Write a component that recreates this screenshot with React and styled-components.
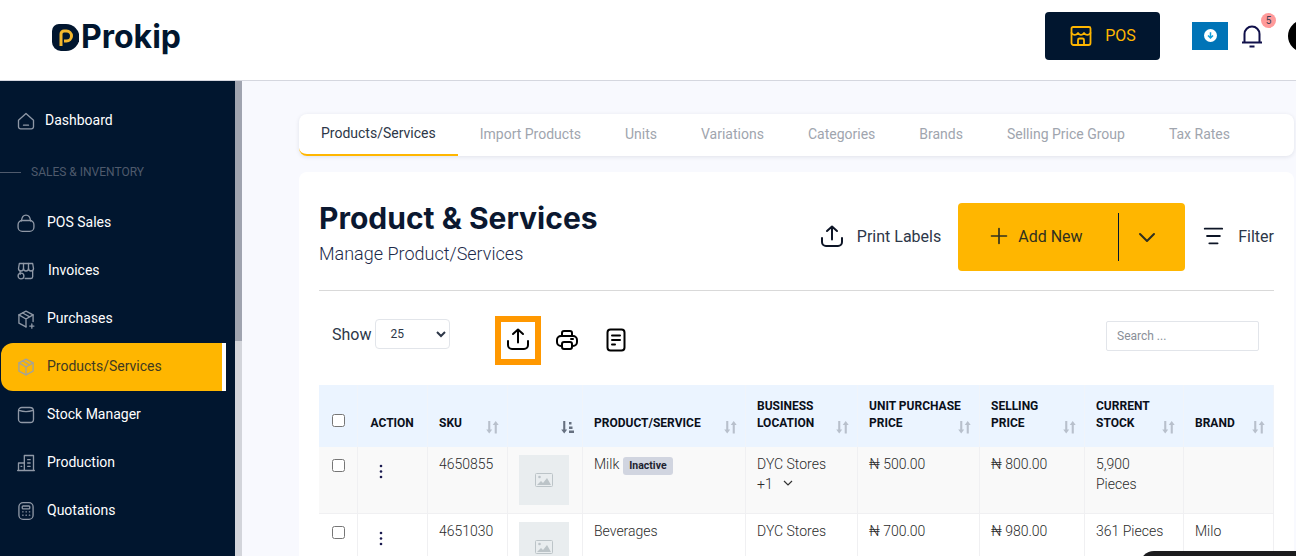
import React from 'react';
import styled, { createGlobalStyle } from 'styled-components';

const GlobalStyle = createGlobalStyle`
  html, body {
    margin: 0;
    height: 556px;
    overflow: hidden;
    background: #fff;
    font-family: Roboto, "Liberation Sans", sans-serif;
  }
  * { box-sizing: border-box; }
`;

const Shell = styled.div`
  width: 1296px;
  height: 556px;
  overflow: hidden;
  position: relative;
  display: flex;
  flex-direction: column;
`;

const TopBar = styled.header`
  flex: 0 0 81px;
  display: flex;
  align-items: center;
  background: #fff;
  border-bottom: 1px solid #d5d7df;
  padding-left: 52px;
`;

const Logo = styled.div`
  display: flex;
  align-items: center;
  gap: 2px;
  margin-top: -6px;
`;

const LogoText = styled.span`
  font-family: Inter, sans-serif;
  font-weight: 700;
  font-size: 32px;
  line-height: 38px;
  color: #01162f;
`;

const TopActions = styled.div`
  margin-left: auto;
  display: flex;
  align-items: center;
  margin-right: -24px;
  margin-top: -9px;
`;

const PosButton = styled.button`
  width: 115px;
  height: 48px;
  border: 0;
  border-radius: 4px;
  background: #01162f;
  color: #ffb600;
  font: 400 16px Roboto, sans-serif;
  display: flex;
  align-items: center;
  justify-content: center;
  gap: 12px;
  margin-right: 32px;
`;

const Download = styled.div`
  width: 36px;
  height: 28px;
  background: #0074b7;
  display: flex;
  align-items: center;
  justify-content: center;
  margin-right: 12px;
`;

const BellWrap = styled.div`
  position: relative;
  width: 24px;
  height: 24px;
  margin-right: 24px;
`;

const Badge = styled.span`
  position: absolute;
  top: -11px;
  left: 21px;
  width: 15px;
  height: 15px;
  border-radius: 50%;
  background: #ff9a9a;
  color: #3a3f55;
  font-size: 10px;
  line-height: 15px;
  text-align: center;
`;

const Avatar = styled.div`
  width: 32px;
  height: 32px;
  border-radius: 50%;
  background: #000;
  flex: none;
`;

const Body = styled.div`
  flex: 1;
  display: flex;
  min-height: 0;
`;

const Sidebar = styled.nav`
  flex: 0 0 235px;
  background: #01162f;
  padding: 16px 9px 0 1px;
  display: flex;
  flex-direction: column;
`;

const ScrollTrack = styled.div`
  flex: 0 0 7px;
  background: #d3d5db;
`;

const ScrollThumb = styled.div`
  height: 260px;
  background: #a0a4b0;
`;

const NavItem = styled.a`
  height: 48px;
  flex: none;
  display: flex;
  align-items: center;
  padding-left: ${(p) => p.$pad || 46}px;
  padding-bottom: 2px;
  position: relative;
  font-size: 14px;
  font-weight: 400;
  color: ${(p) => (p.$active ? '#3f3a20' : '#fff')};
  background: ${(p) => (p.$active ? '#ffb600' : 'transparent')};
  border-radius: ${(p) => (p.$active ? '12px 0 0 12px' : '0')};
  border-right: ${(p) => (p.$active ? '4px solid #fff' : '0')};
  svg {
    position: absolute;
    left: 15px;
    top: 50%;
    margin-top: -10px;
    color: ${(p) => (p.$active ? '#a3a39a' : '#8f98a6')};
  }
`;

const NavSection = styled.div`
  height: 54px;
  flex: none;
  margin-left: -1px;
  display: flex;
  align-items: center;
  gap: 10px;
  font-size: 12px;
  font-weight: 400;
  color: #4f5a6c;
  &::before {
    content: '';
    width: 21px;
    height: 1px;
    background: #4f5a6c;
  }
`;

const Main = styled.main`
  flex: 1;
  min-width: 0;
  background: #f8f9fe;
  padding: 33px 0 0 57px;
`;

const Tabs = styled.div`
  height: 42px;
  width: 995px;
  background: #fff;
  border-radius: 8px;
  display: flex;
  box-shadow: 0 1px 4px rgba(20, 30, 60, 0.1);
`;

const Tab = styled.div`
  height: 42px;
  padding: 0 22px;
  font-size: 14px;
  line-height: ${(p) => (p.$active ? 39 : 41)}px;
  white-space: nowrap;
  color: ${(p) => (p.$active ? '#2d3748' : '#a0a5ae')};
  border-bottom: ${(p) => (p.$active ? '2px solid #ffb600' : '0')};
  border-radius: ${(p) => (p.$active ? '0 0 0 8px' : '0')};
`;

const Card = styled.section`
  margin-top: 16px;
  width: 995px;
  height: 500px;
  background: #fff;
  border-radius: 8px;
  padding: 0 20px;
`;

const CardHead = styled.div`
  height: 119px;
  display: flex;
  align-items: center;
  border-bottom: 1px solid #d9d9d9;
  padding-top: 12px;
`;

const Title = styled.div`
  margin-right: auto;
  margin-top: -8px;
`;

const H1 = styled.h1`
  margin: -1px 0 0;
  font-family: Inter, sans-serif;
  font-size: 30px;
  line-height: 36px;
  font-weight: 700;
  color: #0b1830;
`;

const Sub = styled.div`
  font-size: 18px;
  font-weight: 300;
  line-height: 22px;
  margin-top: 7px;
  color: #1c2a4a;
`;

const TextAction = styled.div`
  display: flex;
  align-items: center;
  color: #2d3748;
  font-size: 16px;
  padding-bottom: 2px;
  gap: ${(p) => p.$gap}px;
  margin-right: ${(p) => p.$mr || 0}px;
  svg { color: #0d1526; }
`;

const AddNew = styled.div`
  width: 227px;
  height: 68px;
  background: #ffb600;
  border-radius: 4px;
  display: flex;
  align-items: center;
  color: #30301f;
  font-size: 16px;
  margin-right: 17px;
`;

const AddLabel = styled.div`
  width: 161px;
  height: 48px;
  border-right: 1px solid #01162f;
  display: flex;
  align-items: center;
  gap: 9px;
  padding: 0 0 2px 31px;
`;

const AddCaret = styled.div`
  flex: 1;
  display: flex;
  justify-content: center;
  padding-right: 10px;
`;

const Tools = styled.div`
  height: 94px;
  display: flex;
  align-items: center;
  padding: 0 15px 0 13px;
`;

const ShowLabel = styled.label`
  font-size: 16px;
  color: #2d3748;
  display: flex;
  align-items: center;
  gap: 4px;
  margin-right: 45px;
  margin-top: -8px;
`;

const PageSize = styled.select`
  width: 75px;
  height: 30px;
  border: 1px solid #e2e5ea;
  border-radius: 4px;
  background: #fff;
  font: 12px Roboto, sans-serif;
  color: #2d3748;
  padding-left: 10px;
`;

const ToolButton = styled.div`
  width: 46px;
  height: 49px;
  display: flex;
  align-items: center;
  justify-content: center;
  border: ${(p) => (p.$focus ? '6px solid #ff9800' : '0')};
  padding-bottom: ${(p) => (p.$focus ? 4 : 0)}px;
  margin-right: 3px;
  margin-top: ${(p) => (p.$focus ? 5 : 3)}px;
  color: #000;
`;

const Search = styled.input`
  margin-left: auto;
  width: 153px;
  height: 30px;
  border: 1px solid #e2e5ea;
  border-radius: 2px;
  font: 12px Roboto, sans-serif;
  padding: 0 10px;
  margin-top: -4px;
  &::placeholder { color: #8a8f98; }
`;

const Table = styled.table`
  width: 954px;
  table-layout: fixed;
  border-collapse: collapse;
`;

const Th = styled.th`
  height: 62px;
  background: #ebf4ff;
  border-right: 1px solid #f0f4fa;
  padding: 0 0 15px ${(p) => p.$pl || 11.5}px;
  position: relative;
  vertical-align: bottom;
  text-align: left;
  font-size: 12px;
  line-height: 17px;
  font-weight: 700;
  white-space: nowrap;
  color: #0a0f1a;
  svg {
    position: absolute;
    right: 8px;
    bottom: 13px;
  }
`;

const Td = styled.td`
  height: ${(p) => p.$h}px;
  padding: 7px 11.5px;
  border-right: 1px solid #f0f0f2;
  border-bottom: 1px solid #f0f0f2;
  vertical-align: top;
  font-size: 14px;
  line-height: 20px;
  font-weight: 300;
  color: #2b2b2b;
  background: ${(p) => (p.$alt ? '#f9f9f9' : '#fff')};
`;

const Tag = styled.span`
  display: inline-block;
  height: 18px;
  line-height: 18px;
  padding: 0 6px;
  margin-left: 4px;
  border-radius: 3px;
  background: #d1d5e0;
  font-size: 10.5px;
  font-weight: 700;
  color: #1d2230;
  vertical-align: top;
  margin-top: 3px;
`;

const Thumb = styled.div`
  width: 50px;
  height: 50px;
  margin-top: 1px;
  background: #e9edef;
  display: flex;
  align-items: center;
  justify-content: center;
  color: #bcc4c8;
`;

const Check = styled.input.attrs({ type: 'checkbox' })`
  width: 13px;
  height: 13px;
  margin: 5px 0 0 1px;
`;

const Kebab = styled.div`
  padding: 10px 0 0 10px;
  color: #1a1a50;
`;

const Caret = styled.span`
  margin-left: 10px;
  svg { vertical-align: 3px; }
`;

const Chat = styled.div`
  position: absolute;
  right: 0;
  bottom: -30px;
  width: 156px;
  height: 35px;
  background: #1c1c1e;
  border-radius: 14px 0 0 0;
`;

const Ico = ({ size = 20, sw = 1.6, children }) => (
  <svg
    width={size}
    height={size}
    viewBox="0 0 24 24"
    fill="none"
    stroke="currentColor"
    strokeWidth={sw}
    strokeLinecap="round"
    strokeLinejoin="round"
  >
    {children}
  </svg>
);

const icons = {
  home: (
    <>
      <path d="M3 11l9-8 9 8v8a2.500 2.500 0 0 1-2.500 2.500h-13A2.500 2.500 0 0 1 3 19z" />
      <path d="M9 17h6" />
    </>
  ),
  bag: (
    <>
      <rect x="2.500" y="9" width="19" height="13" rx="5" />
      <path d="M6.500 9.500C7 5 9 2.500 12 2.500s5 2.500 5.500 7" />
    </>
  ),
  shop: (
    <>
      <path d="M4 3h16l1 6a3 3 0 0 1-6 0 3 3 0 0 1-6 0 3 3 0 0 1-6 0z" />
      <path d="M9 3v6M15 3v6M5 12v4M20 12v7a2 2 0 0 1-2 2h-7" />
      <circle cx="6" cy="18" r="3.500" />
    </>
  ),
  box: (
    <>
      <path d="M12 2.500l8.500 4.500v8M12 2.500L3.500 7v10l8.500 4.500" />
      <path d="M3.500 7l8.500 5 8.500-5M12 12v9.500M8 4.800l8.500 4.700" />
      <path d="M19 18v5M16.500 20.500h5" />
    </>
  ),
  cube: (
    <>
      <path d="M12 2.500l8.500 4.500v10L12 21.500 3.500 17V7z" />
      <path d="M3.500 7l8.500 5 8.500-5M12 12v9.500M8 4.800l8.500 4.700" />
    </>
  ),
  stock: <path d="M7 3h9.500c3 0 4.500 1.500 4.500 4.500V17a4 4 0 0 1-4 4H7a4 4 0 0 1-4-4V7a4 4 0 0 1 4-4zM3.500 6.500C8 8 16 8 20.500 6.500" />,
  building: (
    <>
      <path d="M3 21V12h7M10 21V3h11v18zM2 21h20" />
      <path d="M14 8h3M14 12h3M14 16h3M6 16h1" />
    </>
  ),
  calc: (
    <>
      <rect x="3.500" y="2" width="17" height="20" rx="5" />
      <rect x="7.500" y="6" width="9" height="3.500" rx="1" />
      <path d="M8 13h.5M12 13h.5M16 13h.5M8 17h.5M12 17h.5M16 17h.5" />
    </>
  ),
};

const nav = [
  ['bag', 'POS Sales'],
  ['shop', 'Invoices', 47],
  ['box', 'Purchases'],
  ['cube', 'Products/Services', 46, true],
  ['stock', 'Stock Manager'],
  ['building', 'Production'],
  ['calc', 'Quotations'],
];

const tabs = [
  'Products/Services',
  'Import Products',
  'Units',
  'Variations',
  'Categories',
  'Brands',
  'Selling Price Group',
  'Tax Rates',
];

const UploadIcon = () => (
  <Ico size={24} sw={2}>
    <path d="M12 15.500V2.500M7 7l5-4.500L17 7" />
    <path d="M2 14v4a4 4 0 0 0 4 4h12a4 4 0 0 0 4-4v-4" />
  </Ico>
);

const SortIcon = () => (
  <svg width="13" height="14" viewBox="0 0 13 14" fill="#b8c0cc">
    <path d="M2.200 1h2.100v8.500h1.900L3.200 13.500 .2 9.500h2zM8.700 13.500h2.100V5h1.900L9.700 1 6.700 5h2z" />
  </svg>
);

const SortActive = () => (
  <svg width="13" height="14" viewBox="0 0 13 14" fill="#667080">
    <path d="M2.200 1h2.100v8.500h1.900L3.200 13.500 .2 9.500h2zM8 2h2.500v2.500H8zM8 6.500h3.500V9H8zM8 10.500h5V13H8z" />
  </svg>
);

const ImageIcon = () => (
  <svg width="18" height="14" viewBox="0 0 18 14" fill="none" stroke="currentColor">
    <rect x=".5" y=".5" width="17" height="13" rx="1" />
    <circle cx="4.500" cy="4" r="1.300" fill="currentColor" stroke="none" />
    <path d="M2 12l4-4 2 2 4-5 4 7z" fill="currentColor" stroke="none" />
  </svg>
);

const DotsIcon = () => (
  <svg width="4" height="15" viewBox="0 0 4 15" fill="currentColor">
    <circle cx="2" cy="2" r="1.300" />
    <circle cx="2" cy="7.500" r="1.300" />
    <circle cx="2" cy="13" r="1.300" />
  </svg>
);

const columns = [
  [38, null],
  [70, 'ACTION', false, 13],
  [80, 'SKU', true],
  [75, '', 'active'],
  [163, 'PRODUCT/SERVICE', true],
  [112, ['BUSINESS', 'LOCATION'], true],
  [122, ['UNIT PURCHASE', 'PRICE'], true],
  [105, ['SELLING', 'PRICE'], true],
  [99, ['CURRENT', 'STOCK'], true],
  [90, 'BRAND', true],
];

const App = () => (
  <Shell>
    <GlobalStyle />
    <TopBar>
      <Logo>
        <svg width="27" height="27" viewBox="0 0 27 27">
          <path d="M0 7a7 7 0 0 1 7-7h7a13 13 0 0 1 0 27H9a9 9 0 0 1-9-9z" fill="#01162f" />
          <path
            d="M9 22V10a3 3 0 0 1 3-3h2.500a5 5 0 0 1 0 10H12"
            fill="none"
            stroke="#f5b82e"
            strokeWidth="3"
          />
        </svg>
        <LogoText>Prokip</LogoText>
      </Logo>
      <TopActions>
        <PosButton>
          <Ico size={24} sw={1.8}>
            <path d="M4 3h16a1.500 1.500 0 0 1 1.500 1.500V19a2 2 0 0 1-2 2h-15a2 2 0 0 1-2-2V4.500A1.500 1.500 0 0 1 4 3z" />
            <path d="M2.500 9c2 2.500 4.500 2.500 6.500 0 2 2.500 4 2.500 6 0 2 2.500 4.500 2.500 6.500 0" />
            <path d="M9 21v-5a1.500 1.500 0 0 1 1.500-1.500h3A1.500 1.500 0 0 1 15 16v5" />
          </Ico>
          POS
        </PosButton>
        <Download>
          <svg width="13" height="13" viewBox="0 0 13 13">
            <circle cx="6.500" cy="6.500" r="6.500" fill="#fff" />
            <path d="M6.500 3.200v5.500M4 6.500l2.500 2.500L9 6.500" fill="none" stroke="#0ea0dc" strokeWidth="1.500" />
          </svg>
        </Download>
        <BellWrap>
          <svg width="24" height="24" viewBox="0 0 24 24" fill="none" stroke="#10104a" strokeWidth="2">
            <path d="M2 18.500h20M4.500 18.500V10a7.500 7.500 0 0 1 15 0v8.500M9.500 22.500h5" />
          </svg>
          <Badge>5</Badge>
        </BellWrap>
        <Avatar />
      </TopActions>
    </TopBar>
    <Body>
      <Sidebar>
        <NavItem $pad={44}>
          <Ico>{icons.home}</Ico>
          Dashboard
        </NavItem>
        <NavSection>SALES &amp; INVENTORY</NavSection>
        {nav.map(([icon, label, pad, active]) => (
          <NavItem key={label} $pad={pad} $active={active}>
            <Ico>{icons[icon]}</Ico>
            {label}
          </NavItem>
        ))}
      </Sidebar>
      <ScrollTrack>
        <ScrollThumb />
      </ScrollTrack>
      <Main>
        <Tabs>
          {tabs.map((t, i) => (
            <Tab key={t} $active={i === 0}>
              {t}
            </Tab>
          ))}
        </Tabs>
        <Card>
          <CardHead>
            <Title>
              <H1>Product &amp; Services</H1>
              <Sub>Manage Product/Services</Sub>
            </Title>
            <TextAction $gap={13} $mr={17}>
              <UploadIcon />
              Print Labels
            </TextAction>
            <AddNew>
              <AddLabel>
                <Ico size={20} sw={2}>
                  <path d="M12 3v18M3 12h18" />
                </Ico>
                Add New
              </AddLabel>
              <AddCaret>
                <Ico size={24} sw={2}>
                  <path d="M5 9l7 7 7-7" />
                </Ico>
              </AddCaret>
            </AddNew>
            <TextAction $gap={14}>
              <Ico size={22} sw={2}>
                <path d="M3 4h19M5.500 12h14M8 20h9" />
              </Ico>
              Filter
            </TextAction>
          </CardHead>
          <Tools>
            <ShowLabel>
              Show
              <PageSize defaultValue="25">
                <option>25</option>
              </PageSize>
            </ShowLabel>
            <ToolButton $focus>
              <UploadIcon />
            </ToolButton>
            <ToolButton>
              <Ico size={24} sw={2}>
                <path d="M7 8V5a2 2 0 0 1 2-2h6a2 2 0 0 1 2 2v3" />
                <rect x="2" y="8" width="20" height="10" rx="4" />
                <rect x="7" y="14" width="10" height="7" rx="2" fill="#fff" />
                <path d="M16 11h2" />
              </Ico>
            </ToolButton>
            <ToolButton>
              <Ico size={24} sw={2}>
                <rect x="3.500" y="1.500" width="17" height="21" rx="3" />
                <path d="M8 7.500h8M8 12h8M8 16.500h3" />
              </Ico>
            </ToolButton>
            <Search placeholder="Search ..." />
          </Tools>
          <Table>
            <colgroup>
              {columns.map(([w], i) => (
                <col key={i} style={{ width: w }} />
              ))}
            </colgroup>
            <thead>
              <tr>
                {columns.map(([, label, sort, pl], i) => (
                  <Th key={i} $pl={pl}>
                    {label === null && <Check />}
                    {Array.isArray(label)
                      ? label.map((l) => <div key={l}>{l}</div>)
                      : label}
                    {sort === true && <SortIcon />}
                    {sort === 'active' && <SortActive />}
                  </Th>
                ))}
              </tr>
            </thead>
            <tbody>
              <tr>
                <Td $alt $h={66}><Check /></Td>
                <Td $alt><Kebab><DotsIcon /></Kebab></Td>
                <Td $alt>4650855</Td>
                <Td $alt><Thumb><ImageIcon /></Thumb></Td>
                <Td $alt>Milk<Tag>Inactive</Tag></Td>
                <Td $alt>
                  DYC Stores
                  <div>
                    +1
                    <Caret>
                      <svg width="10" height="6" viewBox="0 0 10 6" fill="none" stroke="#333" strokeWidth="1.200">
                        <path d="M1 1l4 4 4-4" />
                      </svg>
                    </Caret>
                  </div>
                </Td>
                <Td $alt>₦ 500.00</Td>
                <Td $alt>₦ 800.00</Td>
                <Td $alt>5,900 Pieces</Td>
                <Td $alt />
              </tr>
              <tr>
                <Td $h={67}><Check /></Td>
                <Td><Kebab><DotsIcon /></Kebab></Td>
                <Td>4651030</Td>
                <Td><Thumb><ImageIcon /></Thumb></Td>
                <Td>Beverages</Td>
                <Td>DYC Stores</Td>
                <Td>₦ 700.00</Td>
                <Td>₦ 980.00</Td>
                <Td>361 Pieces</Td>
                <Td>Milo</Td>
              </tr>
            </tbody>
          </Table>
        </Card>
      </Main>
    </Body>
    <Chat />
  </Shell>
);

export default App;
